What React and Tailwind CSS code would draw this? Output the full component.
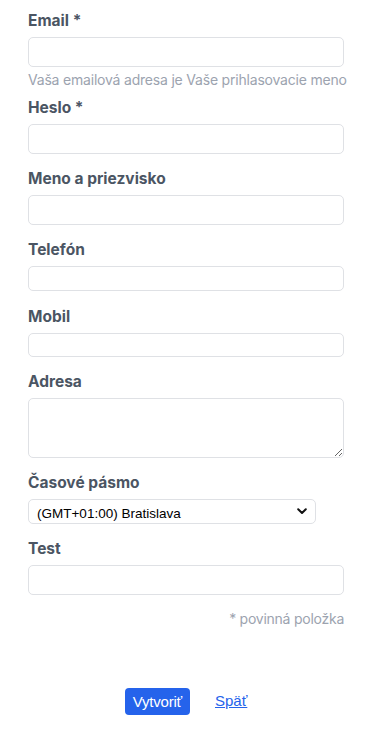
import React from "react";

const font = { fontFamily: 'Inter, "Liberation Sans", sans-serif' };

function Label({ children }) {
  return (
    <label className="block text-[15.5px] leading-[22px] font-bold text-[#4b5563] mb-[5px]">
      {children}
    </label>
  );
}

export default function App() {
  return (
    <div className="bg-white w-[378px] min-h-[729px] pl-[28px] pr-[34px] pt-[10px]" style={font}>
      <div className="mb-[7px]">
        <Label>Email *</Label>
        <input className="block w-full h-[30px] border border-[#dfe1e5] rounded-[5px] bg-white outline-none" />
        <p className="mt-[3px] text-[14px] leading-[20px] text-[#9ca3af] whitespace-nowrap tracking-[-0.2px]">
          Vaša emailová adresa je Vaše prihlasovacie meno
        </p>
      </div>
      <div className="mb-[14px]">
        <Label>Heslo *</Label>
        <input type="password" className="block w-full h-[30px] border border-[#dfe1e5] rounded-[5px] bg-white outline-none" />
      </div>
      <div className="mb-[14px]">
        <Label>Meno a priezvisko</Label>
        <input className="block w-full h-[30px] border border-[#dfe1e5] rounded-[5px] bg-white outline-none" />
      </div>
      <div className="mb-[15px]">
        <Label>Telefón</Label>
        <input className="block w-full h-[25px] border border-[#dfe1e5] rounded-[5px] bg-white outline-none" />
      </div>
      <div className="mb-[14px]">
        <Label>Mobil</Label>
        <input className="block w-full h-[24px] border border-[#dfe1e5] rounded-[5px] bg-white outline-none" />
      </div>
      <div className="mb-[14px]">
        <Label>Adresa</Label>
        <textarea className="block w-full h-[60px] border border-[#dfe1e5] rounded-[5px] bg-white outline-none resize-y" />
      </div>
      <div className="mb-[14px]">
        <Label>Časové pásmo</Label>
        <div className="relative w-[288px] h-[25px] border border-[#dfe1e5] rounded-[5px] bg-white">
          <select
            className="appearance-none w-full h-full bg-transparent pl-[8px] text-[13.5px] text-black outline-none"
            style={{ fontFamily: '"Liberation Sans", Arial, sans-serif' }}
            defaultValue="bratislava"
          >
            <option value="bratislava">(GMT+01:00) Bratislava</option>
          </select>
          <svg className="absolute right-[8px] top-[8px] pointer-events-none" width="10" height="7" viewBox="0 0 10 7">
            <path d="M1.2 1.2 L5 5 L8.8 1.2" fill="none" stroke="#111" strokeWidth="2" strokeLinecap="round" strokeLinejoin="round" />
          </svg>
        </div>
      </div>
      <div>
        <Label>Test</Label>
        <input className="block w-full h-[30px] border border-[#dfe1e5] rounded-[5px] bg-white outline-none" />
      </div>
      <p className="mt-[14px] text-right text-[14px] leading-[20px] text-[#9ca3af] tracking-[-0.25px]">* povinná položka</p>
      <div className="mt-[59px] flex justify-center items-center gap-[25px]">
        <button
          className="h-[27px] px-[8px] rounded-[4px] bg-[#2563eb] text-white text-[15px] leading-[27px] tracking-[-0.2px]"
          style={{ fontFamily: '"Liberation Sans", Arial, sans-serif' }}
        >
          Vytvoriť
        </button>
        <a
          href="#"
          className="text-[#2563eb] underline text-[15px]"
          style={{ fontFamily: '"Liberation Sans", Arial, sans-serif' }}
        >
          Späť
        </a>
      </div>
    </div>
  );
}
